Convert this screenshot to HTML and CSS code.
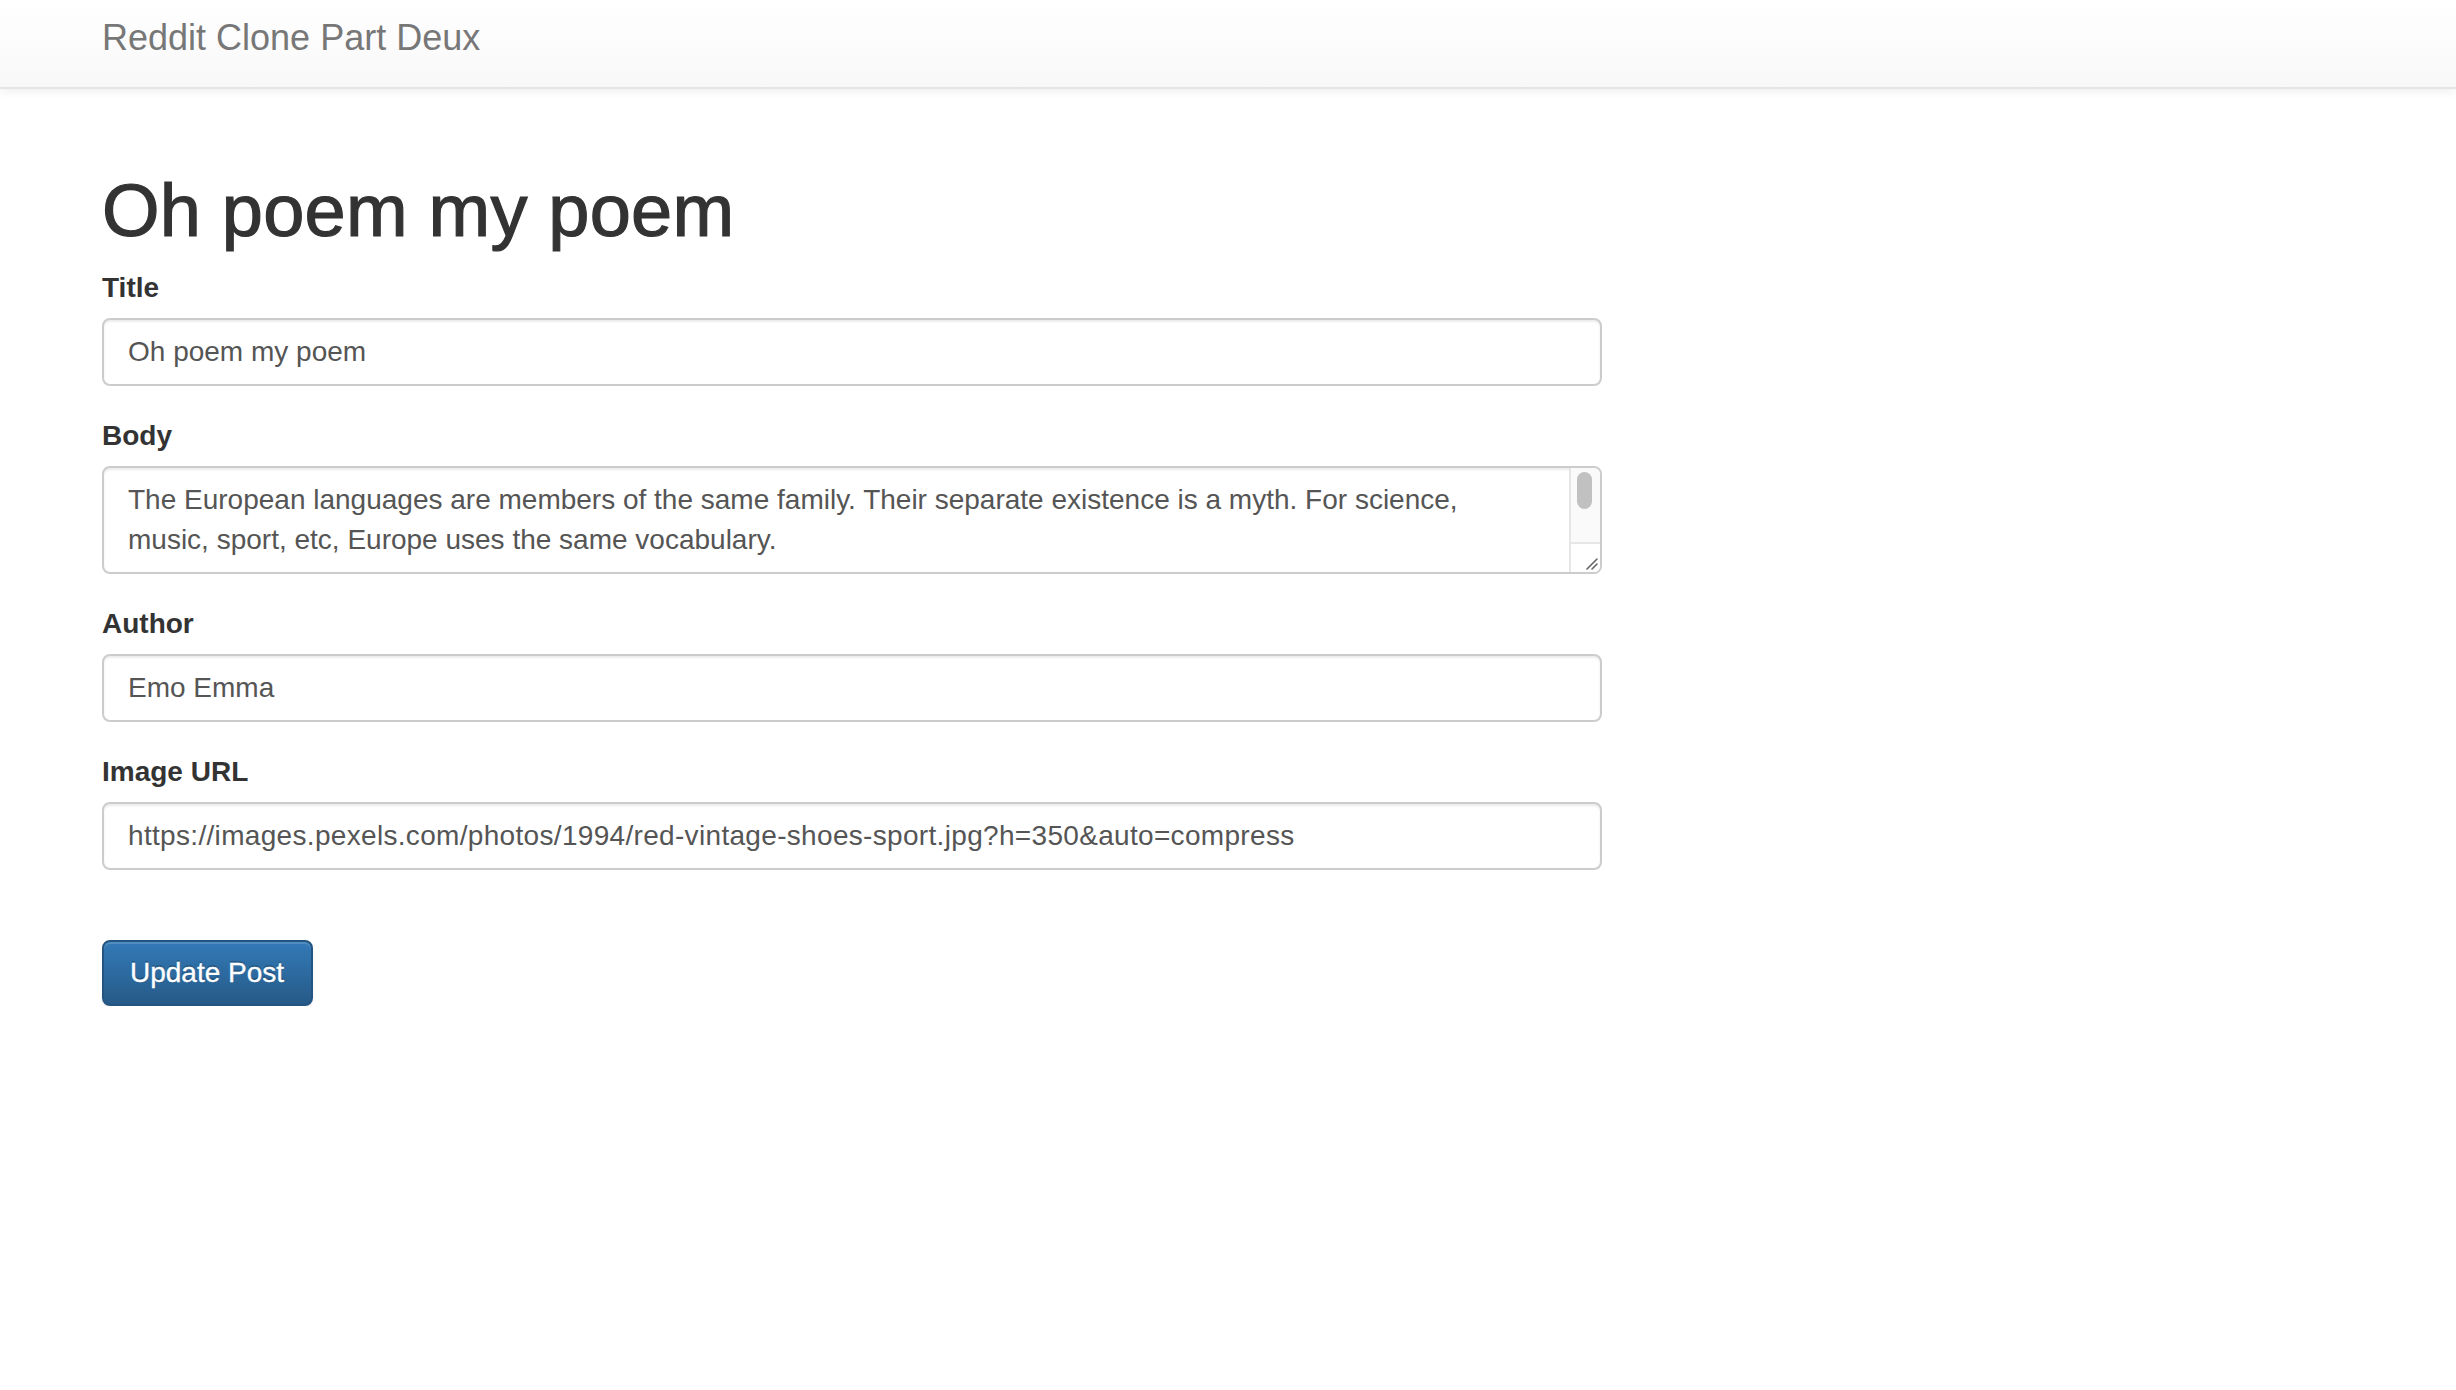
FILE: index.html
```html
<!DOCTYPE html>
<html lang="en">
<head>
<meta charset="utf-8">
<title>Reddit Clone Part Deux</title>
<link rel="stylesheet" href="styles.css">
</head>
<body>
<nav class="navbar">
  <div class="navbar-inner">
    <a class="brand" href="#">Reddit Clone Part Deux</a>
  </div>
</nav>
<main class="page">
  <div class="form-col">
    <h1 class="heading">Oh poem my poem</h1>
    <form class="post-form">
      <div class="form-group">
        <label class="label">Title</label>
        <div class="input">Oh poem my poem</div>
      </div>
      <div class="form-group">
        <label class="label">Body</label>
        <div class="textarea">
          <div class="ta-text">The European languages are members of the same family. Their separate existence is a myth. For science,<br>music, sport, etc, Europe uses the same vocabulary.</div>
          <div class="ta-scroll">
            <div class="ta-track"><div class="ta-thumb"></div></div>
            <div class="ta-resizer">
              <svg width="28" height="28" viewBox="0 0 28 28"><path d="M15 25 L25 15 M20 25 L25 20" stroke="#666" stroke-width="1.6" stroke-linecap="round" fill="none"/></svg>
            </div>
          </div>
        </div>
      </div>
      <div class="form-group">
        <label class="label">Author</label>
        <div class="input">Emo Emma</div>
      </div>
      <div class="form-group">
        <label class="label">Image URL</label>
        <div class="input input-url">https://images.pexels.com/photos/1994/red-vintage-shoes-sport.jpg?h=350&amp;auto=compress</div>
      </div>
      <button type="button" class="btn-primary">Update Post</button>
    </form>
  </div>
</main>
</body>
</html>
```

FILE: styles.css
```css
html, body {
  margin: 0;
  padding: 0;
  background: #fff;
}
body {
  font-family: "Liberation Sans", Arial, Helvetica, sans-serif;
  color: #333;
}
.navbar {
  height: 87px;
  background-image: linear-gradient(to bottom, #ffffff 0, #f8f8f8 100%);
  border-bottom: 2px solid #e5e5e5;
  box-shadow: 0 2px 10px rgba(0, 0, 0, 0.075);
  position: relative;
}
.navbar-inner {
  padding: 18px 102px 0;
}
.brand {
  display: inline-block;
  font-size: 36px;
  line-height: 40px;
  color: #777;
  text-decoration: none;
}
.page {
  padding: 40px 102px 0;
}
.form-col {
  width: 1500px;
}
.heading {
  margin: 42px 0 18px;
  font-size: 74px;
  line-height: 79px;
  font-weight: 500;
  color: #333;
  letter-spacing: 0.2px;
  -webkit-text-stroke: 1.2px #333;
}
.post-form {
  display: block;
}
.form-group {
  margin-bottom: 30px;
}
.label {
  display: block;
  font-size: 28px;
  line-height: 40px;
  font-weight: bold;
  color: #333;
  margin-bottom: 10px;
}
.input {
  box-sizing: border-box;
  height: 68px;
  padding: 12px 24px;
  border: 2px solid #ccc;
  border-radius: 8px;
  box-shadow: inset 0 2px 2px rgba(0, 0, 0, 0.075);
  font-size: 28px;
  line-height: 40px;
  color: #555;
  white-space: nowrap;
  overflow: hidden;
}
.input-url {
  letter-spacing: 0.32px;
}
.textarea {
  box-sizing: border-box;
  height: 108px;
  border: 2px solid #ccc;
  border-radius: 8px;
  box-shadow: inset 0 2px 2px rgba(0, 0, 0, 0.075);
  display: flex;
  overflow: hidden;
}
.ta-text {
  flex: 1;
  padding: 12px 24px;
  font-size: 28px;
  line-height: 40px;
  color: #555;
  white-space: nowrap;
  overflow: hidden;
}
.ta-scroll {
  width: 29px;
  display: flex;
  flex-direction: column;
  border-left: 2px solid #e6e6e6;
  background: #fafafa;
}
.ta-track {
  flex: 1;
  padding: 4px 0 0 6px;
}
.ta-thumb {
  width: 15px;
  height: 37px;
  border-radius: 8px;
  background: #c1c1c1;
}
.ta-resizer {
  height: 28px;
  border-top: 2px solid #e6e6e6;
  background: #fff;
  display: flex;
  justify-content: flex-end;
  align-items: flex-end;
}
.ta-resizer svg {
  display: block;
}
.btn-primary {
  display: inline-block;
  margin-top: 40px;
  box-sizing: border-box;
  height: 66px;
  padding: 11px 27px 11px 26px;
  font-family: "Liberation Sans", Arial, Helvetica, sans-serif;
  font-size: 28px;
  line-height: 40px;
  color: #fff;
  background-image: linear-gradient(to bottom, #337ab7 0, #265a88 100%);
  border: 2px solid #245580;
  border-radius: 8px;
  text-shadow: 0 -2px 0 rgba(0, 0, 0, 0.2);
  -webkit-text-stroke: 0.3px #fff;
  box-shadow: inset 0 2px 0 rgba(255, 255, 255, 0.15), 0 2px 2px rgba(0, 0, 0, 0.075);
  cursor: pointer;
}
```
